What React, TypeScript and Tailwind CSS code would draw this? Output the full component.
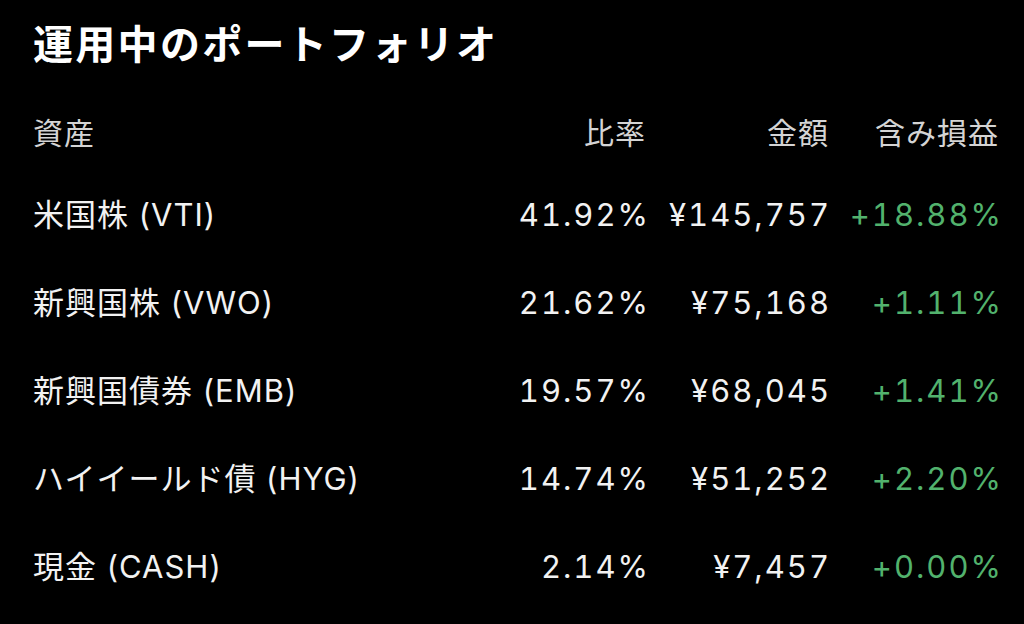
const rows = [
  { name: "米国株 (VTI)", ratio: "41.92%", amount: "¥145,757", gain: "+18.88%" },
  { name: "新興国株 (VWO)", ratio: "21.62%", amount: "¥75,168", gain: "+1.11%" },
  { name: "新興国債券 (EMB)", ratio: "19.57%", amount: "¥68,045", gain: "+1.41%" },
  { name: "ハイイールド債 (HYG)", ratio: "14.74%", amount: "¥51,252", gain: "+2.20%" },
  { name: "現金 (CASH)", ratio: "2.14%", amount: "¥7,457", gain: "+0.00%" },
];

export default function App() {
  return (
    <div
      className="h-[624px] w-[1024px] overflow-hidden bg-black pl-[33px] pt-[17px] text-[#f2f2f2]"
      style={{ fontFamily: '"Inter", "Noto Sans CJK JP", sans-serif' }}
    >
      <h1 className="h-[56px] text-[40px] font-bold leading-[56px] tracking-[2.3px] text-white">
        運用中のポートフォリオ
      </h1>

      <div className="mt-[22px] grid h-[76px] grid-cols-[441px_172px_183px_170px] items-center text-[30px] tracking-[1px] text-[#d4d4d4]">
        <span>資産</span>
        <span className="text-right">比率</span>
        <span className="text-right">金額</span>
        <span className="text-right">含み損益</span>
      </div>

      {rows.map((row) => (
        <div
          key={row.name}
          className="grid h-[88px] grid-cols-[440px_177px_181px_172px] items-center text-[31px]"
        >
          <span className="tracking-[1px]">{row.name}</span>
          <span className="text-right tabular-nums tracking-[2px]">{row.ratio}</span>
          <span className="text-right tabular-nums tracking-[2px]">{row.amount}</span>
          <span className="text-right tabular-nums tracking-[2px] text-[#52b26d]">{row.gain}</span>
        </div>
      ))}
    </div>
  );
}
